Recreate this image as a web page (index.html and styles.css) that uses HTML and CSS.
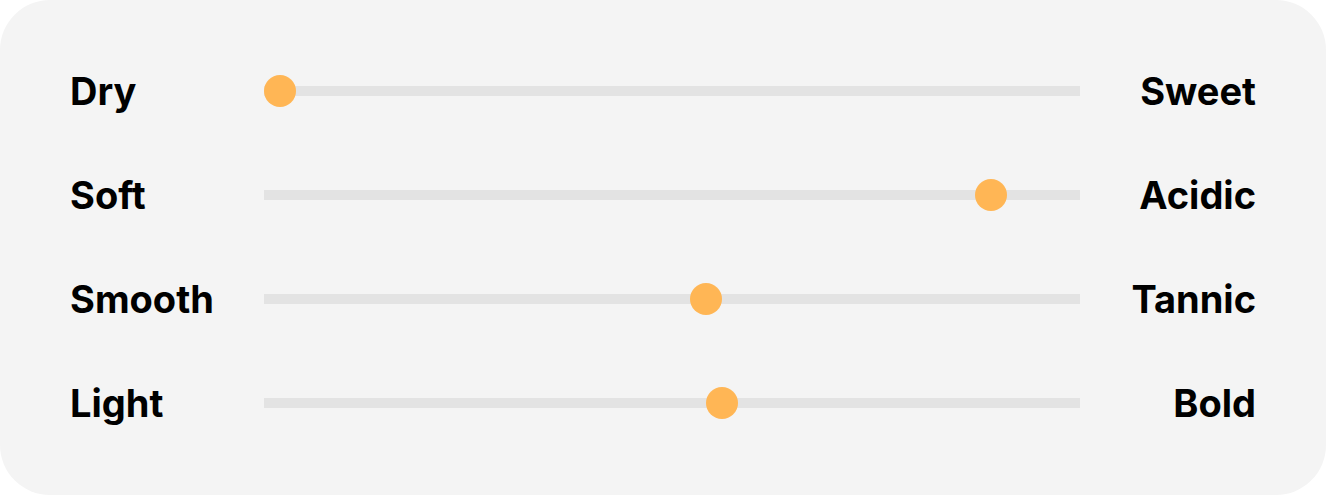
FILE: index.html
```html
<!DOCTYPE html>
<html lang="en">
<head>
<meta charset="utf-8">
<title>Taste profile</title>
<link rel="stylesheet" href="styles.css">
</head>
<body>
<section class="card">
  <div class="row">
    <span class="label">Dry</span>
    <div class="track"><span class="thumb" style="--v:0"></span></div>
    <span class="label right">Sweet</span>
  </div>
  <div class="row">
    <span class="label">Soft</span>
    <div class="track"><span class="thumb" style="--v:0.907"></span></div>
    <span class="label right">Acidic</span>
  </div>
  <div class="row">
    <span class="label">Smooth</span>
    <div class="track"><span class="thumb" style="--v:0.543"></span></div>
    <span class="label right">Tannic</span>
  </div>
  <div class="row">
    <span class="label">Light</span>
    <div class="track"><span class="thumb" style="--v:0.564"></span></div>
    <span class="label right">Bold</span>
  </div>
</section>
</body>
</html>
```

FILE: styles.css
```css
html, body {
  margin: 0;
  padding: 0;
  background: #ffffff;
}

.card {
  box-sizing: border-box;
  width: 1326px;
  height: 495px;
  background: #f4f4f4;
  border-radius: 50px;
  padding: 69px 70px 0 70px;
  display: flex;
  flex-direction: column;
  gap: 60px;
  font-family: Inter, "Noto Sans", sans-serif;
}

.row {
  display: grid;
  grid-template-columns: 194px 1fr 176px;
  align-items: center;
  height: 44px;
}

.label {
  font-size: 38px;
  font-weight: 700;
  line-height: 44px;
  color: #000000;
  white-space: nowrap;
}

.label.right {
  text-align: right;
}

.track {
  position: relative;
  height: 10px;
  margin-bottom: 1px;
  background: #e3e3e3;
}

.thumb {
  position: absolute;
  top: -11px;
  left: calc((100% - 32px) * var(--v));
  width: 32px;
  height: 32px;
  border-radius: 50%;
  background: #ffb655;
}
```
